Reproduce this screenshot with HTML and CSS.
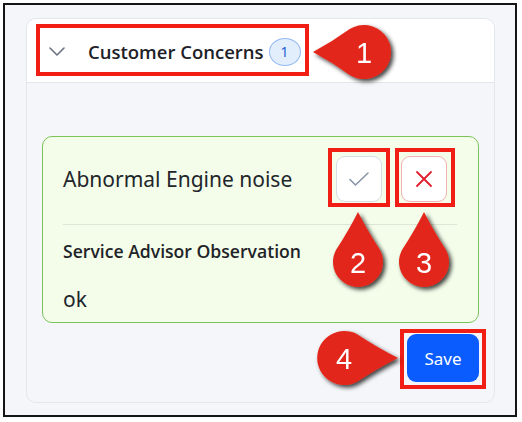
FILE: index.html
```html
<!DOCTYPE html>
<html>
<head>
<meta charset="utf-8">
<link rel="stylesheet" href="styles.css">
</head>
<body>
<div class="frame">
  <div class="card">
    <div class="card-header">
      <svg class="chevron" width="16" height="9" viewBox="0 0 16 9"><path d="M1 1 L8 8 L15 1" fill="none" stroke="#6b7280" stroke-width="1.6" stroke-linecap="round" stroke-linejoin="round"/></svg>
      <span class="title">Customer Concerns</span>
      <span class="badge">1</span>
    </div>
    <div class="card-body">
      <div class="concern">
        <div class="concern-row">
          <span class="concern-name">Abnormal Engine noise</span>
          <div class="actions">
            <button class="btn-icon btn-accept"><svg width="22" height="16" viewBox="0 0 22 16"><path d="M2 8.5 L7.5 14 L20 2" fill="none" stroke="#8a94a7" stroke-width="1.6" stroke-linecap="round" stroke-linejoin="round"/></svg></button>
            <button class="btn-icon btn-reject"><svg width="18" height="18" viewBox="0 0 18 18"><path d="M2 2 L16 16 M16 2 L2 16" fill="none" stroke="#e11d2e" stroke-width="1.8" stroke-linecap="round"/></svg></button>
          </div>
        </div>
        <div class="divider"></div>
        <div class="obs-label">Service Advisor Observation</div>
        <div class="obs-value">ok</div>
      </div>
      <div class="footer">
        <button class="btn-save">Save</button>
      </div>
    </div>
  </div>

  <svg class="overlay" width="510" height="410" viewBox="5 5 510 410">
    <defs>
      <filter id="sh" x="-30%" y="-30%" width="160%" height="160%">
        <feDropShadow dx="2.5" dy="2.5" stdDeviation="2" flood-color="#000" flood-opacity="0.75"/>
      </filter>
    </defs>
    <g fill="none" stroke="#f01e14" stroke-width="4">
      <rect x="38" y="26" width="269" height="48"/>
      <rect x="330" y="150" width="58" height="55"/>
      <rect x="397" y="150" width="56" height="55"/>
      <rect x="402" y="331" width="82" height="56"/>
    </g>
    <g fill="#e3261a" filter="url(#sh)">
      <path transform="translate(364 52)" d="M-51 0 Q-32 -10 -14.3 -22.9 A27 27 0 1 1 -14.3 22.9 Q-32 10 -51 0 Z"/>
      <path transform="translate(358 262)" d="M0 -50 Q-9 -32 -21.7 -12.5 A25 25 0 1 0 21.7 -12.5 Q9 -32 0 -50 Z"/>
      <path transform="translate(424 262)" d="M0 -50 Q-9 -32 -21.7 -12.5 A25 25 0 1 0 21.7 -12.5 Q9 -32 0 -50 Z"/>
      <path transform="translate(344 358)" d="M54 0 Q34 -10 13.5 -23.5 A27 27 0 1 0 13.5 23.5 Q34 10 54 0 Z"/>
    </g>
  </svg>
  <span class="num num1">1</span>
  <span class="num num2">2</span>
  <span class="num num3">3</span>
  <span class="num num4">4</span>
</div>
</body>
</html>
```

FILE: styles.css
```css
* { box-sizing: border-box; }
html, body { margin: 0; padding: 0; background: #ffffff; }
body { font-family: "Noto Sans", "Open Sans", sans-serif; color: #1f2328; }

.frame {
  position: relative;
  margin: 3px 0 0 3px;
  width: 514px;
  height: 414px;
  border: 2px solid #151515;
  background: #f5f6fa;
  padding: 13px 20px 0 21px;
}

.card {
  width: 469px;
  height: 385px;
  border: 1px solid #e3e6ec;
  border-radius: 10px;
  background: #f5f6fa;
  overflow: hidden;
  display: flex;
  flex-direction: column;
}

.card-header {
  height: 64px;
  background: #ffffff;
  border-bottom: 1px solid #e3e6ec;
  display: flex;
  align-items: center;
  padding: 2px 0 0 22px;
}
.chevron { display: block; margin-right: 23px; }
.title { font-family: "Open Sans", "Noto Sans", sans-serif; font-size: 18.5px; font-weight: 600; color: #1d2127; }
.badge {
  margin-left: 5px;
  width: 32px;
  height: 28px;
  border-radius: 50%;
  background: #e3eefc;
  border: 1.5px solid #93b9f2;
  color: #2462d6;
  font-size: 14px;
  display: flex;
  align-items: center;
  justify-content: center;
}

.card-body {
  flex: 1;
  padding: 53px 15px 19px 15px;
  display: flex;
  flex-direction: column;
}

.concern {
  height: 187px;
  border: 1.5px solid #7cc45a;
  border-radius: 10px;
  background: #f3fdea;
  padding: 19px 21px 0 20px;
}
.concern-row {
  display: flex;
  align-items: center;
  justify-content: space-between;
}
.concern-name { font-size: 21px; color: #22262b; }
.actions { display: flex; gap: 19px; margin-right: 10px; }
.btn-icon {
  width: 46px;
  height: 46px;
  border-radius: 9px;
  background: #ffffff;
  display: flex;
  align-items: center;
  justify-content: center;
  padding: 0;
}
.btn-accept { border: 1px solid #d7dde7; }
.btn-reject { border: 1px solid #f3b2b4; }

.divider { height: 1px; background: #dde6d6; margin-top: 22px; }
.obs-label { font-family: "Open Sans", "Noto Sans", sans-serif; font-size: 17.6px; font-weight: 600; margin-top: 14px; line-height: 24px; color: #1f2328; }
.obs-value { font-size: 21px; margin-top: 22px; line-height: 28px; color: #22262b; }

.footer { display: flex; justify-content: flex-end; margin-top: 11px; }
.btn-save {
  width: 72px;
  height: 48px;
  border: none;
  border-radius: 9px;
  background: #0a5cff;
  color: #ffffff;
  font-family: "Noto Sans", sans-serif;
  font-size: 17px;
  font-weight: 400;
}

.overlay { position: absolute; left: 0; top: 0; pointer-events: none; }
.num {
  position: absolute;
  font-family: "Liberation Sans", Arial, sans-serif;
  font-size: 29px;
  color: #ffffff;
  line-height: 1;
  transform: translate(-50%, -50%);
}
.num1 { left: 359px; top: 48px; }
.num2 { left: 353px; top: 258px; }
.num3 { left: 419px; top: 258px; }
.num4 { left: 339px; top: 354px; }
```
